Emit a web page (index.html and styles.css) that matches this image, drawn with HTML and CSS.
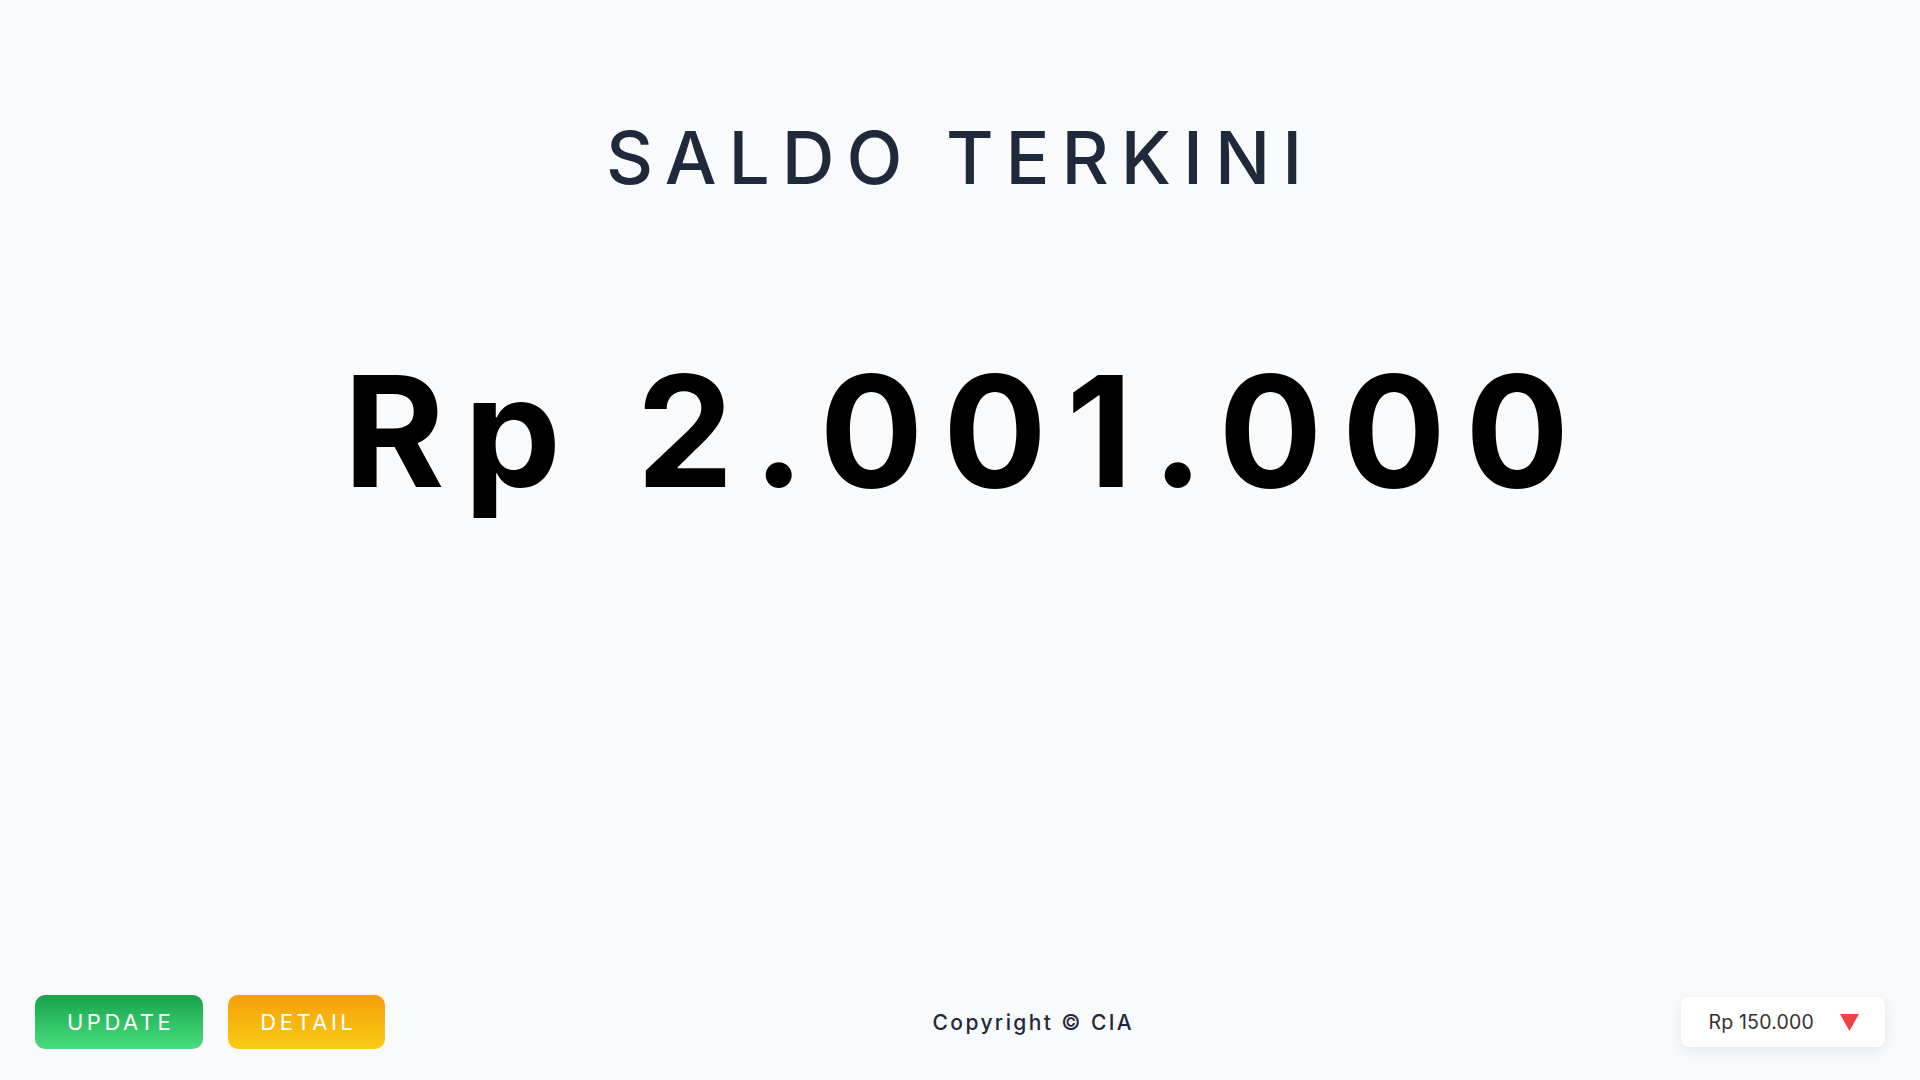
FILE: index.html
```html
<!DOCTYPE html>
<html lang="id">
<head>
<meta charset="utf-8">
<title>Saldo Terkini</title>
<link rel="stylesheet" href="styles.css">
</head>
<body>
<div class="page">
  <main class="main">
    <h1 class="title">SALDO TERKINI</h1>
    <div class="amount">Rp 2.001.000</div>
  </main>
  <footer class="footer">
    <div class="actions">
      <button class="btn btn-update">UPDATE</button>
      <button class="btn btn-detail">DETAIL</button>
    </div>
    <div class="copyright">Copyright © CIA</div>
    <div class="card">
      <span class="card-text">Rp 150.000</span>
      <svg class="card-icon" width="19" height="17" viewBox="0 0 19 17"><polygon points="0,0 19,0 9.5,17" fill="#ef4444"/></svg>
    </div>
  </footer>
</div>
</body>
</html>
```
FILE: styles.css
```css
* { box-sizing: border-box; }
html, body { margin: 0; padding: 0; }
body {
  background: #f8fafc;
  font-family: Inter, "Noto Sans", sans-serif;
}
.page {
  min-height: 100vh;
  display: flex;
  flex-direction: column;
}
.main {
  display: flex;
  flex-direction: column;
  align-items: center;
  padding-top: 121px;
}
.title {
  margin: 0;
  font-size: 73px;
  line-height: 1;
  font-weight: 500;
  letter-spacing: 12px;
  color: #1e293b;
}
.amount {
  margin-top: 160px;
  padding-left: 12px;
  font-size: 154px;
  line-height: 1;
  font-weight: 700;
  letter-spacing: 19.5px;
  color: #000;
}
.footer {
  margin-top: auto;
  display: flex;
  justify-content: space-between;
  align-items: center;
  padding: 0 35px 31px 35px;
}
.actions {
  display: flex;
  gap: 25px;
}
.btn {
  height: 54px;
  border: 0;
  border-radius: 10px;
  padding: 0 29px 0 32px;
  font-family: inherit;
  font-size: 22px;
  font-weight: 400;
  letter-spacing: 3.5px;
  color: #fff;
  cursor: pointer;
}
.btn-update { background: linear-gradient(180deg, #16a34a 0%, #4ade80 100%); }
.btn-detail { background: linear-gradient(180deg, #f59e0b 0%, #facc15 100%); }
.copyright {
  font-size: 21px;
  font-weight: 500;
  letter-spacing: 2.4px;
  color: #1e293b;
}
.card {
  display: flex;
  align-items: center;
  gap: 26px;
  height: 50px;
  padding: 0 26px 0 27px;
  background: #fff;
  border-radius: 8px;
  box-shadow: 0 4px 14px rgba(15, 23, 42, 0.08);
}
.card-text {
  font-size: 19.5px;
  letter-spacing: 0.2px;
  color: #333;
}
.card-icon { display: block; }
```
